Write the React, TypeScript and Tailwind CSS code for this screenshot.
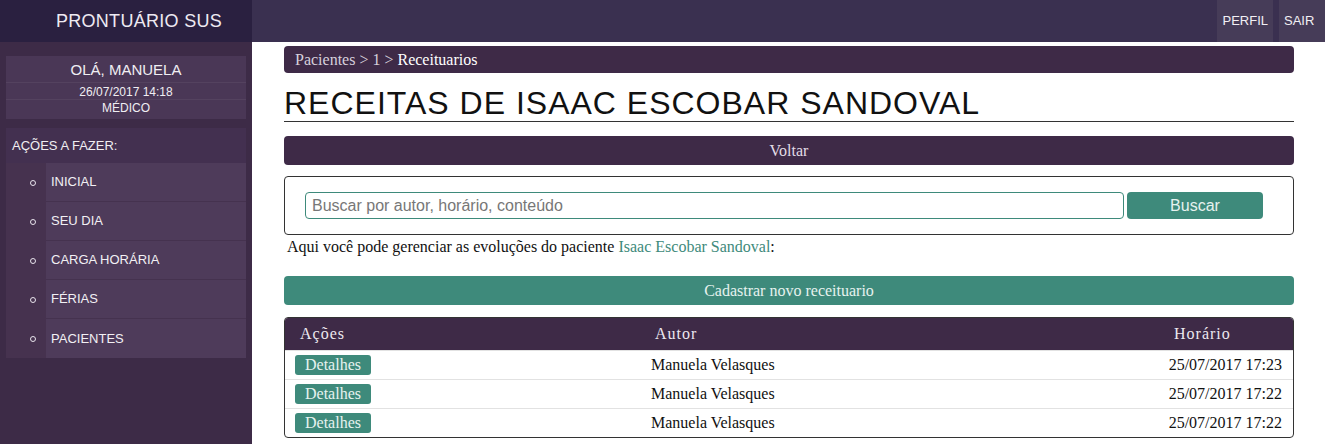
import React from "react";

const serif = { fontFamily: '"Liberation Serif", "Times New Roman", serif' };

function Sidebar() {
  const items = ["INICIAL", "SEU DIA", "CARGA HORÁRIA", "FÉRIAS", "PACIENTES"];
  return (
    <aside className="w-[252px] shrink-0 bg-[#3d2b47] pt-[14px] pb-[10px]">
      <div className="mx-[6px] bg-[#4a3756] text-[#f0eef2] text-center">
        <div className="h-[27px] flex items-center justify-center text-[15px] pt-[2px] border-b border-[#54425f]">OLÁ, MANUELA</div>
        <div className="h-[17px] flex items-center justify-center text-[12px] pt-[1px] border-b border-[#54425f]">26/07/2017 14:18</div>
        <div className="h-[19px] flex items-start justify-center text-[12px] leading-[17px]">MÉDICO</div>
      </div>
      <div className="mx-[6px] mt-[9px] bg-[#433050]">
        <div className="h-[35px] flex items-center pl-[6px] text-[13px] text-[#f0eef2]">AÇÕES A FAZER:</div>
        {items.map((it, i) => (
          <div key={it} className="flex h-[39px]">
            <div className="w-[40px] bg-[#46324f] flex items-center justify-center pl-[14px]">
              <span className="w-[6px] h-[6px] rounded-full border border-[#e8e4ec]" />
            </div>
            <div className={`flex-1 bg-[#4e3b5a] flex items-center pl-[5px] text-[13px] text-[#f2f0f4] ${i < items.length - 1 ? "border-b border-[#45324f]" : ""}`}>
              {it}
            </div>
          </div>
        ))}
      </div>
    </aside>
  );
}

function Row({ time }: { time: string }) {
  return (
    <div className="flex h-[29px] items-center border-t border-[#e2e2e2] text-[16px] text-[#111]">
      <div className="w-[355px] pl-[10px]">
        <span className="inline-block h-[20px] leading-[20px] px-[10px] rounded-[3px] bg-[#3e8a7b] text-[#e6f2ef]">Detalhes</span>
      </div>
      <div className="flex-1 pl-[11px]">Manuela Velasques</div>
      <div className="pr-[11px]">{time}</div>
    </div>
  );
}

export default function App() {
  return (
    <div className="w-[1325px] h-[444px] overflow-hidden flex flex-col bg-white" style={{ fontFamily: '"Liberation Sans", Arial, sans-serif' }}>
      <header className="h-[42px] flex bg-[#3a3050] shrink-0">
        <div className="w-[252px] bg-[#2a2040] flex items-center justify-center pl-[26px] text-[18px] tracking-[0.3px] text-[#eeeaf2]">PRONTUÁRIO SUS</div>
        <div className="flex-1" />
        <div className="flex h-full">
          <div className="h-full px-[5px] flex items-center bg-[#463c58] text-[13px] text-[#f2f0f4]">PERFIL</div>
          <div className="w-[6px]" />
          <div className="h-full w-[46px] pl-[5px] flex items-center bg-[#463c58] text-[13px] text-[#f2f0f4]">SAIR</div>
        </div>
      </header>
      <div className="flex flex-1 min-h-0">
        <Sidebar />
        <main className="flex-1 px-[32px] pt-[4px]" style={serif}>
          <div className="w-[1010px]">
            <div className="h-[27px] rounded-[4px] bg-[#3e2a47] flex items-center pl-[11px] text-[16px]">
              <span className="text-[#d6d0dc]">Pacientes &gt; 1 &gt;&nbsp;</span>
              <span className="text-white">Receituarios</span>
            </div>
            <h1 className="mt-[12px] h-[36px] leading-[36px] text-[32px] tracking-[1px] text-[#111] border-b border-[#333] box-content" style={{ fontFamily: '"Liberation Sans", Arial, sans-serif' }}>
              RECEITAS DE ISAAC ESCOBAR SANDOVAL
            </h1>
            <div className="mt-[14px] h-[29px] rounded-[4px] bg-[#3e2a47] flex items-center justify-center text-[16px] text-[#e2dde6]">Voltar</div>
            <div className="mt-[11px] h-[59px] rounded-[4px] border border-[#333] flex items-start pt-[15px] pl-[20px] pr-[30px]">
              <div className="flex-1 h-[27px] rounded-[4px] border border-[#3e8a7b] flex items-center pl-[6px] text-[16px] text-[#777]" style={{ fontFamily: '"Liberation Sans", Arial, sans-serif' }}>
                Buscar por autor, horário, conteúdo
              </div>
              <div className="ml-[3px] w-[136px] h-[27px] rounded-[4px] bg-[#3e8a7b] flex items-center justify-center text-[16px] text-[#e6f2ef]" style={{ fontFamily: '"Liberation Sans", Arial, sans-serif' }}>
                Buscar
              </div>
            </div>
            <div className="mt-[3px] h-[18px] leading-[18px] pl-[3px] text-[16px] text-[#111]">
              Aqui você pode gerenciar as evoluções do paciente <span className="text-[#3e8a7b]">Isaac Escobar Sandoval</span>:
            </div>
            <div className="mt-[20px] h-[29px] rounded-[4px] bg-[#3e8a7b] flex items-center justify-center text-[16px] text-[#e6f2ef]">Cadastrar novo receituario</div>
            <div className="mt-[12px] rounded-[4px] border border-[#333] overflow-hidden">
              <div className="h-[32px] bg-[#3e2a47] flex items-center text-[16px] tracking-[1px] text-[#ece8ef]">
                <div className="w-[355px] pl-[15px]">Ações</div>
                <div className="flex-1 pl-[15px]">Autor</div>
                <div className="w-[134px] pl-[15px]">Horário</div>
              </div>
              <Row time="25/07/2017 17:23" />
              <Row time="25/07/2017 17:22" />
              <Row time="25/07/2017 17:22" />
            </div>
          </div>
        </main>
      </div>
    </div>
  );
}
